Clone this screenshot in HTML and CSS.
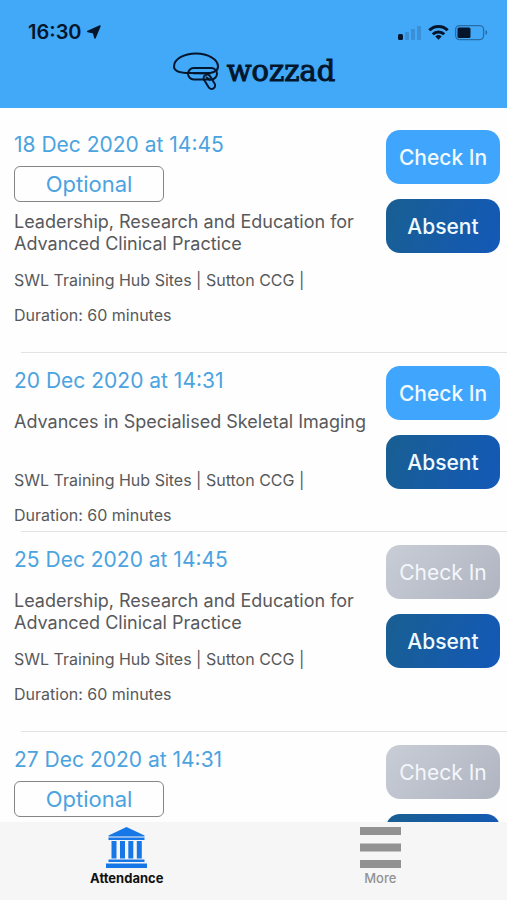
FILE: index.html
```html
<!DOCTYPE html>
<html lang="en">
<head>
<meta charset="utf-8">
<meta name="viewport" content="width=device-width, initial-scale=1">
<title>wozzad – Attendance</title>
<link rel="stylesheet" href="styles.css">
</head>
<body>
<header class="header">
  <div class="status">
    <span class="time">16:30
      <svg width="14" height="14" viewBox="0 0 14 14" aria-hidden="true"><path d="M13 1 8 13 6.500 7.700.8 6.500z" fill="#04162c" stroke="#04162c" stroke-width="1.500" stroke-linejoin="round"/></svg>
    </span>
    <svg class="indicators" width="92" height="20" viewBox="0 0 92 20" aria-hidden="true">
      <rect x="1" y="12" width="5" height="6" rx="1.5" fill="#04162c"/>
      <g fill="#3a8fd6"><rect x="8" y="10" width="4" height="8" rx="1"/><rect x="14" y="7" width="4" height="11" rx="1"/><rect x="20" y="4" width="4" height="14" rx="1"/></g>
      <g fill="none" stroke="#04162c" stroke-width="3"><path d="M32.3 8.2a13 13 0 0 1 18.4 0"/><path d="M35.8 12.3a8 8 0 0 1 11.4 0"/></g>
      <path d="M38.4 14.4a4.4 4.4 0 0 1 6.2 0l-3.1 3.4z" fill="#04162c"/>
      <rect x="58.600" y="3.600" width="28" height="14" rx="4" fill="none" stroke="#286ca8" stroke-width="1.300"/>
      <rect x="60.500" y="5.500" width="13" height="10.500" rx="1.500" fill="#04162c"/>
      <path d="M88.500 8c2.300.8 2.300 4.200 0 5z" fill="#286ca8"/>
    </svg>
  </div>
  <div class="brand">
    <svg width="48" height="40" viewBox="0 0 48 40" fill="none" stroke="#04162c" stroke-width="2" aria-hidden="true">
      <path d="M17.500 22C8 22 2 20 2 15.500 2 8 12 2.500 24 2.500S46 8.500 46 15.500C46 20 41 22.300 33 22.300z"/>
      <rect x="16" y="17" width="29" height="11.500" rx="5.750"/>
      <path d="M21 22.200h18"/>
      <rect x="34" y="23" width="7" height="15.500" rx="3.500" transform="rotate(-32 37.500 31)"/>
      <path d="m34 26 4.500 3.500"/>
    </svg>
    <span class="wordmark">wozzad</span>
  </div>
</header>

<main class="list">
  <article class="session">
    <div class="details">
      <h2 class="date">18 Dec 2020 at 14:45</h2>
      <span class="badge">Optional</span>
      <p class="title">Leadership, Research and Education for Advanced Clinical Practice</p>
      <p class="meta">SWL Training Hub Sites | Sutton CCG |</p>
      <p class="meta">Duration: 60 minutes</p>
    </div>
    <div class="actions">
      <button class="btn check">Check In</button>
      <button class="btn absent">Absent</button>
    </div>
  </article>
  <article class="session compact">
    <div class="details">
      <h2 class="date">20 Dec 2020 at 14:31</h2>
      <p class="title">Advances in Specialised Skeletal Imaging</p>
      <p class="meta">SWL Training Hub Sites | Sutton CCG |</p>
      <p class="meta">Duration: 60 minutes</p>
    </div>
    <div class="actions">
      <button class="btn check">Check In</button>
      <button class="btn absent">Absent</button>
    </div>
  </article>
  <article class="session">
    <div class="details">
      <h2 class="date">25 Dec 2020 at 14:45</h2>
      <p class="title">Leadership, Research and Education for Advanced Clinical Practice</p>
      <p class="meta">SWL Training Hub Sites | Sutton CCG |</p>
      <p class="meta">Duration: 60 minutes</p>
    </div>
    <div class="actions">
      <button class="btn check" disabled>Check In</button>
      <button class="btn absent">Absent</button>
    </div>
  </article>
  <article class="session">
    <div class="details">
      <h2 class="date">27 Dec 2020 at 14:31</h2>
      <span class="badge">Optional</span>
    </div>
    <div class="actions">
      <button class="btn check" disabled>Check In</button>
      <button class="btn absent" aria-label="Absent"></button>
    </div>
  </article>
</main>

<nav class="tabs">
  <a class="tab active" href="#attendance">
    <svg width="41" height="41" viewBox="0 0 41 41" fill="#1877e6" aria-hidden="true">
      <path d="M20.500 0 38.500 8.500v1h-36v-1zM2.500 10.500h36v2.500h-36zM5.500 14h5v17.500h-5zM14 14h5v17.500h-5zM22.300 14h5v17.500h-5zM30.800 14h5v17.500h-5zM2.500 32.500h36v2.500h-36zM0 36.500h41V41H0z"/>
    </svg>
    <span>Attendance</span>
  </a>
  <a class="tab" href="#more">
    <svg width="41" height="41" viewBox="0 0 41 41" fill="#929292" aria-hidden="true"><path d="M0 0h41v8H0zM0 16.500h41v8H0zM0 33h41v8H0z"/></svg>
    <span>More</span>
  </a>
</nav>
</body>
</html>
```
FILE: styles.css
```css
* { box-sizing: border-box; }

body {
  margin: 0;
  height: 100vh;
  display: flex;
  flex-direction: column;
  overflow: hidden;
  background: #fefefe;
  color: #58595b;
  font-family: Inter, "Liberation Sans", sans-serif;
}

h2, p { margin: 0; font-weight: 400; }

.header {
  flex: none;
  padding: 20px 18px 17px 28px;
  background: #42a8f8;
  color: #04162c;
}

.status {
  display: flex;
  justify-content: space-between;
  align-items: center;
  height: 24px;
}

.time {
  display: flex;
  align-items: center;
  gap: 5px;
  font-size: 20px;
  font-weight: 600;
}

.brand {
  display: flex;
  justify-content: center;
  align-items: center;
  gap: 7px;
  height: 40px;
  margin: 7px 10px 0 0;
}

.wordmark {
  font-family: "DejaVu Serif", serif;
  font-size: 29px;
  line-height: 32px;
  -webkit-text-stroke: 1px #04162c;
}

.list {
  flex: 1;
  min-height: 0;
  overflow: hidden;
  padding-top: 9px;
}

.session {
  display: flex;
  padding: 0 7px 27px 14px;
  border-bottom: 1px solid;
  border-image: linear-gradient(to right, transparent 22px, #e2e3e5 22px) 1;
}

.session.compact { padding-bottom: 6px; }

.details {
  flex: 1;
  min-width: 0;
  padding-top: 15px;
}

.date {
  color: #4ba3e0;
  font-size: 21px;
  line-height: 26px;
}

.badge {
  display: block;
  width: 150px;
  height: 36px;
  margin: 8px 0 -8px;
  border: 1px solid #858585;
  border-radius: 6px;
  color: #4ba3e0;
  font-size: 22px;
  line-height: 34px;
  text-align: center;
}

.title {
  min-height: 44px;
  margin-top: 17px;
  font-size: 18px;
  line-height: 22px;
}

.meta {
  margin-top: 15px;
  font-size: 16px;
  line-height: 20px;
}

.actions {
  display: flex;
  flex-direction: column;
  gap: 15px;
  width: 114px;
  padding-top: 13px;
}

.btn {
  height: 54px;
  padding: 0;
  border: 0;
  border-radius: 14px;
  color: #f0faff;
  font: 500 21px Inter, "Liberation Sans", sans-serif;
}

.check { background: #3fa5fd; }
.absent { background: linear-gradient(110deg, #195f92, #1359b8); }

.check:disabled {
  background: linear-gradient(135deg, #c9cdd6, #afb4c1);
  color: #f4f6fb;
  font-weight: 400;
}

.tabs {
  flex: none;
  display: flex;
  height: 78px;
  background: #f7f6f7;
}

.tab {
  flex: 1;
  display: flex;
  flex-direction: column;
  align-items: center;
  padding-top: 5px;
  color: #929292;
  font-size: 13px;
  font-weight: 500;
  line-height: 20px;
  text-decoration: none;
}

.active {
  color: #111;
  font-weight: 700;
}
```
